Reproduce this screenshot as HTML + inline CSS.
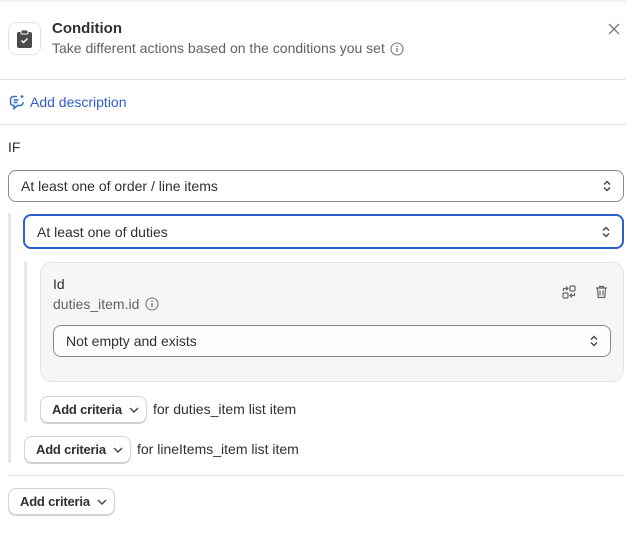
<!DOCTYPE html>
<html><head><meta charset="utf-8"><style>
*{box-sizing:border-box;margin:0;padding:0}
body{width:626px;height:553px;background:#fff;font-family:"Liberation Sans",Arial,sans-serif;color:#303030;position:relative;overflow:hidden;font-size:14px}
.a{position:absolute}
.sel{position:absolute;border:1px solid #8a8a8a;border-radius:8px;background:#fff;display:flex;align-items:center;padding-left:12px;font-size:14px;color:#303030}
.sel svg{position:absolute;right:12px;top:50%;margin-top:-6px}
.btn{position:absolute;height:27px;border:1px solid #d4d4d4;border-radius:8px;background:#fff;box-shadow:0 1px 0 #d0d0d0;font-size:13px;font-weight:bold;display:flex;align-items:center;padding-left:11px;color:#303030;letter-spacing:-0.2px}
.btn svg{margin-left:7px}
.hr{position:absolute;left:0;width:626px;height:1px;background:#e3e3e3}
.lt{position:absolute;font-size:14px;color:#303030}
</style></head><body>
<div class="a" style="left:0;top:0;width:626px;height:3px;background:linear-gradient(#ececec,#fff)"></div>
<div class="a" style="left:8px;top:22px;width:33px;height:33px;border:1px solid #e3e3e3;border-radius:8px"></div>
<svg class="a" style="left:16px;top:29px" width="17" height="20" viewBox="0 0 17 20"><rect x="1" y="3" width="15" height="16" rx="2" fill="#4a4a4a"/><rect x="5" y="1" width="7" height="4" rx="1" fill="#4a4a4a" stroke="#fff" stroke-width="1"/><path d="M5.5 11.5l2 2 4-4" stroke="#fff" stroke-width="1.5" fill="none"/></svg>
<div class="a" style="left:52px;top:20px;font-size:15px;font-weight:bold;color:#303030">Condition</div>
<div class="a" style="left:52px;top:40px;font-size:14px;color:#616161">Take different actions based on the conditions you set</div>
<svg class="a" style="left:390px;top:42px" width="14" height="14" viewBox="0 0 14 14"><circle cx="7" cy="7" r="6" fill="none" stroke="#777" stroke-width="1.1"/><path d="M7 6v4" stroke="#777" stroke-width="1.3"/><circle cx="7" cy="4.2" r=".8" fill="#777"/></svg>
<svg class="a" style="left:608px;top:23px" width="12" height="12" viewBox="0 0 12 12"><path d="M1 1l10 10M11 1L1 11" stroke="#777" stroke-width="1.3"/></svg>
<div class="hr" style="top:79px"></div>
<svg class="a" style="left:9px;top:94px" width="17" height="16" viewBox="0 0 17 16"><path d="M8 2.5H4.5A3 3 0 0 0 1.5 5.5v3a3 3 0 0 0 3 3h0.5v3l3.5-3H11a3 3 0 0 0 3-3V8" fill="none" stroke="#2c6ecb" stroke-width="1.5"/><path d="M4.5 6h5M4.5 8.5h4" stroke="#2c6ecb" stroke-width="1.4"/><path d="M13 1v3M11.5 2.5h3" stroke="#2c6ecb" stroke-width="1.3"/></svg>
<div class="a" style="left:30px;top:94px;font-size:14px;color:#2c5ecf">Add description</div>
<div class="hr" style="top:124px"></div>
<div class="a" style="left:8px;top:139px;font-size:14px">IF</div>
<div class="sel" style="left:8px;top:170px;width:616px;height:32px">At least one of order / line items<svg width="8" height="12" viewBox="0 0 8 12"><path d="M1 4.5l3-3 3 3M1 7.5l3 3 3-3" stroke="#444" stroke-width="1.4" fill="none"/></svg></div>
<div class="a" style="left:8px;top:213px;width:3px;height:250px;background:#e8e8e8"></div>
<div class="sel" style="left:23px;top:214px;width:601px;height:35px;border:2px solid #2c5ecf">At least one of duties<svg width="8" height="12" viewBox="0 0 8 12"><path d="M1 4.5l3-3 3 3M1 7.5l3 3 3-3" stroke="#444" stroke-width="1.4" fill="none"/></svg></div>
<div class="a" style="left:24px;top:262px;width:3px;height:160px;background:#e8e8e8"></div>
<div class="a" style="left:40px;top:262px;width:584px;height:120px;background:#f6f6f6;border:1px solid #e5e5e5;border-radius:12px"></div>
<div class="a" style="left:53px;top:276px;font-size:14px">Id</div>
<div class="a" style="left:53px;top:296px;font-size:14px;color:#616161">duties_item.id</div>
<svg class="a" style="left:145px;top:297px" width="14" height="14" viewBox="0 0 14 14"><circle cx="7" cy="7" r="6" fill="none" stroke="#777" stroke-width="1.1"/><path d="M7 6v4" stroke="#777" stroke-width="1.3"/><circle cx="7" cy="4.2" r=".8" fill="#777"/></svg>
<svg class="a" style="left:562px;top:285px" width="14" height="14" viewBox="0 0 14 14"><rect x="8" y="1" width="5" height="5" rx="1" fill="none" stroke="#666" stroke-width="1.2"/><rect x="1" y="8" width="5" height="5" rx="1" fill="none" stroke="#666" stroke-width="1.2"/><path d="M1.5 6V3.5h4M4 1.5l2 2-2 2M12.5 8v2.5h-4M10 8.5l-2 2 2 2" fill="none" stroke="#666" stroke-width="1.2"/></svg>
<svg class="a" style="left:595px;top:285px" width="13" height="14" viewBox="0 0 13 14"><path d="M1 3h11M4.5 3V1.5h4V3M2.5 3l.7 9.5h6.6l.7-9.5M5 5.5v5M8 5.5v5" fill="none" stroke="#666" stroke-width="1.2"/></svg>
<div class="sel" style="left:53px;top:325px;width:558px;height:32px;background:#fdfdfd">Not empty and exists<svg width="8" height="12" viewBox="0 0 8 12"><path d="M1 4.5l3-3 3 3M1 7.5l3 3 3-3" stroke="#444" stroke-width="1.4" fill="none"/></svg></div>
<div class="btn" style="left:40px;top:396px;width:107px">Add criteria<svg width="10" height="6" viewBox="0 0 10 6"><path d="M1 1l4 4 4-4" stroke="#444" stroke-width="1.4" fill="none"/></svg></div>
<div class="lt" style="left:153px;top:401px">for duties_item list item</div>
<div class="btn" style="left:24px;top:436px;width:107px">Add criteria<svg width="10" height="6" viewBox="0 0 10 6"><path d="M1 1l4 4 4-4" stroke="#444" stroke-width="1.4" fill="none"/></svg></div>
<div class="lt" style="left:137px;top:441px">for lineItems_item list item</div>
<div class="hr" style="top:475px;left:8px;width:616px"></div>
<div class="btn" style="left:8px;top:488px;width:107px">Add criteria<svg width="10" height="6" viewBox="0 0 10 6"><path d="M1 1l4 4 4-4" stroke="#444" stroke-width="1.4" fill="none"/></svg></div>
</body></html>
